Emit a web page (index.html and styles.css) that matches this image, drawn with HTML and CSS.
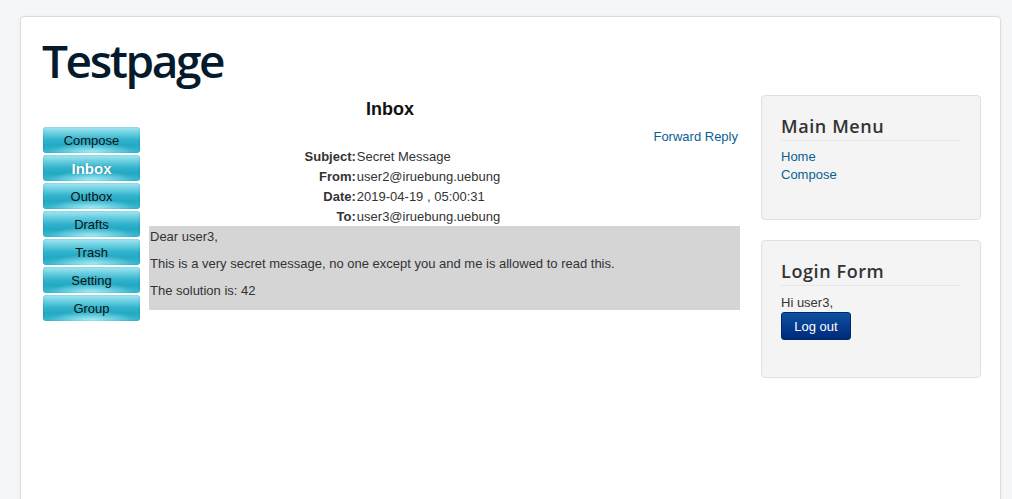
FILE: index.html
```html
<!DOCTYPE html>
<html>
<head>
<meta charset="utf-8">
<title>Testpage</title>
<link rel="stylesheet" href="styles.css">
</head>
<body>
<div class="site">
  <header class="header">
    <h1 class="brand">Testpage</h1>
  </header>
  <div class="row">
    <main class="main">
      <h2 class="page-title">Inbox</h2>
      <div class="mail">
        <nav class="mailnav">
          <a class="navbtn" href="#">Compose</a>
          <a class="navbtn active" href="#">Inbox</a>
          <a class="navbtn" href="#">Outbox</a>
          <a class="navbtn" href="#">Drafts</a>
          <a class="navbtn" href="#">Trash</a>
          <a class="navbtn" href="#">Setting</a>
          <a class="navbtn" href="#">Group</a>
        </nav>
        <section class="message">
          <div class="actions"><a href="#">Forward</a> <a href="#">Reply</a></div>
          <table class="meta">
            <tr><th>Subject:</th><td>Secret Message</td></tr>
            <tr><th>From:</th><td>user2@iruebung.uebung</td></tr>
            <tr><th>Date:</th><td>2019-04-19 , 05:00:31</td></tr>
            <tr><th>To:</th><td>user3@iruebung.uebung</td></tr>
          </table>
          <div class="body">
            <p>Dear user3,</p>
            <p>This is a very secret message, no one except you and me is allowed to read this.</p>
            <p>The solution is: 42</p>
          </div>
        </section>
      </div>
    </main>
    <aside class="sidebar">
      <div class="well">
        <h3 class="well-title">Main Menu</h3>
        <ul class="menu">
          <li><a href="#">Home</a></li>
          <li><a href="#">Compose</a></li>
        </ul>
      </div>
      <div class="well well-login">
        <h3 class="well-title">Login Form</h3>
        <div class="greeting">Hi user3,</div>
        <button class="btn-primary" type="button">Log out</button>
      </div>
    </aside>
  </div>
</div>
</body>
</html>
```

FILE: styles.css
```css
html, body {
  margin: 0;
  padding: 0;
}
body {
  background: #f4f6f7;
  font-family: "Liberation Sans", Arial, sans-serif;
  font-size: 13px;
  line-height: 18px;
  color: #333;
  padding: 16px 11px 0 20px;
  height: 499px;
  box-sizing: border-box;
  overflow: hidden;
}
a {
  color: #0a5f92;
  text-decoration: none;
}
.site {
  background: #fff;
  border: 1px solid #dcdcdc;
  border-radius: 4px;
  padding: 16px 20px 200px 19px;
  box-shadow: 0 0 4px rgba(0,0,0,0.04);
}
.brand {
  margin: 0;
  font-family: "Open Sans", sans-serif;
  font-weight: 600;
  font-size: 46px;
  line-height: 55px;
  letter-spacing: -2.4px;
  color: #051b2d;
  padding-left: 2px;
}
.row {
  display: flex;
  gap: 21px;
}
.main {
  width: 700px;
  flex: none;
}
.page-title {
  margin: 10px 0 7px;
  text-align: center;
  font-size: 18px;
  line-height: 22px;
  font-weight: 700;
  color: #111;
}
.mail {
  display: flex;
  gap: 9px;
}
.mailnav {
  width: 97px;
  margin-left: 3px;
  display: flex;
  flex-direction: column;
  gap: 2px;
  flex: none;
}
.navbtn {
  display: block;
  height: 26px;
  line-height: 27px;
  text-align: center;
  color: #111;
  font-size: 13px;
  border-radius: 3px;
  background:
    radial-gradient(ellipse 45% 40% at 50% 100%, rgba(190,250,255,0.85), rgba(190,250,255,0) 100%),
    linear-gradient(to bottom, #a6e9f2 0%, #6fd0e2 22%, #2fb2cb 50%, #25a8c2 70%, #3cbdd4 100%);
  box-shadow: inset 0 0 2px rgba(0,80,110,0.35);
}
.navbtn.active {
  color: #fff;
  font-weight: 700;
  font-size: 15px;
  text-shadow: 0 0 1px rgba(0,60,80,0.5);
}
.message {
  flex: 1;
  min-width: 0;
}
.actions {
  text-align: right;
  line-height: 19px;
  padding-right: 2px;
}
.meta {
  width: 100%;
  border-collapse: collapse;
}
.meta th {
  width: 35%;
  text-align: right;
  font-weight: 700;
  padding: 2px 0 0 0;
  line-height: 18px;
  color: #333;
}
.meta td {
  padding: 2px 0 0 1px;
  line-height: 18px;
}
.body {
  background: #d5d5d5;
  color: #333;
  padding: 2px 1px 1px 1px;
}
.body p {
  margin: 0 0 9px;
}
.sidebar {
  width: 220px;
  flex: none;
  padding-top: 7px;
}
.well {
  background: #f4f4f4;
  border: 1px solid #e0e0e0;
  border-radius: 4px;
  padding: 18px 19px 19px;
  margin-bottom: 20px;
}
.well-title {
  margin: 0;
  font-family: "Open Sans", sans-serif;
  font-weight: 600;
  font-size: 18px;
  line-height: 24px;
  letter-spacing: 0.6px;
  color: #333;
  padding-bottom: 2px;
  border-bottom: 1px solid #e6e6e6;
}
.menu {
  list-style: none;
  margin: 7px 0 16px;
  padding: 0;
}
.greeting {
  margin-top: 8px;
}
.btn-primary {
  display: block;
  margin-bottom: 18px;
  height: 28px;
  width: 70px;
  padding: 0;
  font-family: "Liberation Sans", Arial, sans-serif;
  font-size: 13px;
  color: #fff;
  border: 1px solid #00296b;
  border-radius: 3px;
  background: linear-gradient(to bottom, #0d51a0, #00297c);
}
```
